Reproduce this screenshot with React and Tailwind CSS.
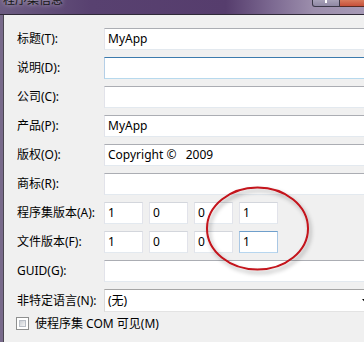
import React from "react";

function Label({ children }) {
  return <div className="w-[87px] shrink-0 text-[12px] leading-none text-black whitespace-nowrap">{children}</div>;
}

function TextBox({ children, hover }) {
  return (
    <div
      className={
        "h-[22px] flex-1 min-w-0 bg-white border flex items-center pl-[3px] text-[12px] text-black whitespace-pre " +
        (hover
          ? "border-t-[#3d7bad] border-l-[#b5cfe7] border-r-[#b5cfe7] border-b-[#b7d9ed]"
          : "border-t-[#abadb3] border-l-[#e2e3ea] border-r-[#e2e3ea] border-b-[#e3e9ef]")
      }
    >
      {children}
    </div>
  );
}

function VerBox({ value, hover }) {
  return (
    <div
      className={
        "h-[22px] w-[39px] shrink-0 bg-white border flex items-center pl-[3px] text-[12px] text-black " +
        (hover
          ? "border-t-[#6f9fcb] border-l-[#a9c7e4] border-r-[#a9c7e4] border-b-[#b7d6ef]"
          : "border-t-[#d3d6dc] border-l-[#e2e3ea] border-r-[#e2e3ea] border-b-[#e3e9ef]")
      }
    >
      {value}
    </div>
  );
}

function Row({ label, children, h = "h-[22px]" }) {
  return (
    <div className={"flex items-center " + h}>
      <Label>{label}</Label>
      {children}
    </div>
  );
}

export default function App() {
  return (
    <div className="relative w-[364px] h-[342px] overflow-hidden bg-[#f0f0f0] flex flex-col font-['Noto_Sans','Noto_Sans_CJK_SC',sans-serif]">
      {/* title bar */}
      <div className="h-[15px] w-[364px] shrink-0 flex items-start border-b border-[#2f2a38] bg-[linear-gradient(90deg,#6c5c82_0%,#584170_25%,#563d6d_62%,#7d6a92_75%,#9c8eac_86%,#a699b5_100%)] overflow-hidden">
        <div className="ml-[3px] mt-[-6px] text-[12px] leading-[12px] text-[#151515] [text-shadow:0_0_5px_rgba(255,255,255,0.7)] whitespace-nowrap">
          程序集信息
        </div>
        <div className="ml-auto flex items-start">
          <div className="w-[28px] h-[7px] border border-t-0 border-[#3b3848] rounded-bl-[3px] bg-[linear-gradient(180deg,#a7a1b8,#8f88a4)] flex justify-center">
            <div className="w-[2px] h-[3px] bg-white" />
          </div>
          <div className="w-[24px] h-[7px] border-b border-[#5a2a22] bg-[linear-gradient(180deg,#d97a5c,#c7503a)]" />
        </div>
      </div>

      {/* body */}
      <div className="flex flex-1 w-[440px]">
        <div className="w-[3px] shrink-0 bg-[#786a8b]" />
        <div className="w-[1px] shrink-0 bg-[#4a4650]" />
        <div className="w-[436px] shrink-0 pt-[13px] pl-[13px] flex flex-col">
          <div className="flex flex-col gap-[7px]">
            <Row label="标题(T):">
              <TextBox>MyApp</TextBox>
            </Row>
            <Row label="说明(D):">
              <TextBox hover />
            </Row>
            <Row label="公司(C):">
              <TextBox />
            </Row>
            <Row label="产品(P):">
              <TextBox>MyApp</TextBox>
            </Row>
            <Row label="版权(O):">
              <TextBox>{"Copyright ©   2009"}</TextBox>
            </Row>
            <Row label="商标(R):">
              <TextBox />
            </Row>
            <Row label="程序集版本(A):">
              <div className="flex gap-[6px]">
                <VerBox value="1" />
                <VerBox value="0" />
                <VerBox value="0" />
                <VerBox value="1" />
              </div>
            </Row>
            <Row label="文件版本(F):">
              <div className="flex gap-[6px]">
                <VerBox value="1" />
                <VerBox value="0" />
                <VerBox value="0" />
                <VerBox value="1" hover />
              </div>
            </Row>
            <Row label="GUID(G):">
              <TextBox />
            </Row>
            <Row label="非特定语言(N):" h="h-[23px]">
              <div className="h-[23px] w-[290px] shrink-0 bg-white border border-t-[#a5a5a5] border-l-[#d9d9d9] border-r-[#d9d9d9] border-b-[#e3e3e3] flex items-center pl-[3px] pr-[24px] text-[12px] text-black">
                <span>(无)</span>
                <svg className="ml-auto mt-[1px] shrink-0" width="7" height="4" viewBox="0 0 7 4">
                  <path d="M0 0H7L3.5 4Z" fill="#000" />
                </svg>
              </div>
            </Row>
          </div>
          <div className="mt-[5px] flex items-center h-[13px]">
            <div className="w-[13px] h-[13px] ml-[-1px] border border-[#8e8f8f] bg-white p-[2px]">
              <div className="w-full h-full bg-[linear-gradient(135deg,#cbcfd5,#f4f4f4)] border border-[#b9bec6]" />
            </div>
            <span className="ml-[6px] text-[12px] leading-none text-black whitespace-nowrap">使程序集 COM 可见(M)</span>
          </div>
        </div>
      </div>

      {/* red annotation ellipse */}
      <svg className="absolute left-[200px] top-[180px] pointer-events-none" width="124" height="104" viewBox="0 0 124 104">
        <defs>
          <filter id="sh" x="-20%" y="-20%" width="140%" height="140%">
            <feDropShadow dx="2" dy="3" stdDeviation="2" floodColor="#000" floodOpacity="0.35" />
          </filter>
        </defs>
        <ellipse cx="57.5" cy="48.5" rx="50.5" ry="41" fill="none" stroke="#c3121a" strokeWidth="2" filter="url(#sh)" />
      </svg>
    </div>
  );
}
